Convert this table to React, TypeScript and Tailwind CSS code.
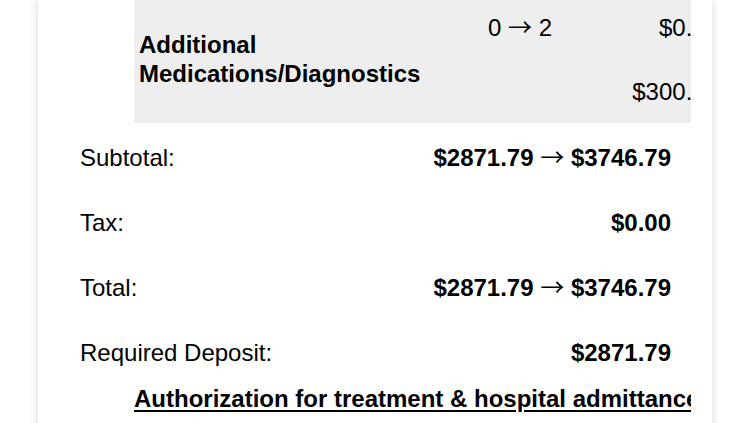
import React from 'react';

const Arrow = () => (
  <span className="inline-block w-[24px] text-center font-['Noto_Sans_CJK_JP'] font-normal leading-none">→</span>
);

const Change = ({ from, to }: { from: string; to: string }) => (
  <>
    {from} <Arrow /> {to}
  </>
);

const summary = [
  { label: 'Subtotal:', value: <Change from="$2871.79" to="$3746.79" /> },
  { label: 'Tax:', value: <>$0.00</> },
  { label: 'Total:', value: <Change from="$2871.79" to="$3746.79" /> },
];

export default function App() {
  return (
    <div
      className="min-h-screen bg-white text-black"
      style={{ fontFamily: '"Liberation Sans", Arial, Helvetica, sans-serif' }}
    >
      <div className="ml-[38px] w-[674px] bg-white pb-[60px] shadow-[0_0_9px_rgba(0,0,0,0.16)]">
        {/* estimate line item, cut off on the right */}
        <div className="ml-[96px] mr-[21px] overflow-hidden">
          <div className="flex h-[123px] w-max bg-[#eeeeee] text-[24px]">
            <div className="w-[330px] flex-none pl-[5px] pt-[30px] text-[24px] font-bold leading-[29px]">
              Additional
              <br />
              Medications/Diagnostics
            </div>
            <div className="h-[32px] w-[112px] flex-none mt-[12px] text-center leading-[32px]">
              <Change from="0" to="2" />
            </div>
            <div className="flex w-[143px] flex-none flex-col pt-[12px] text-right leading-[32px]">
              <span className="h-[32px]">$0.00</span>
              <span className="h-[32px]">
                <Arrow />
              </span>
              <span className="h-[32px]">$300.00</span>
            </div>
          </div>
        </div>

        {/* totals */}
        <div className="mt-[20px] flex flex-col gap-[36px] pl-[42px] pr-[41px] text-[24px] leading-[29px]">
          {summary.map((row) => (
            <div key={row.label} className="flex h-[29px] items-start justify-between">
              <span>{row.label}</span>
              <span className="font-bold">{row.value}</span>
            </div>
          ))}
          <div className="flex h-[29px] items-start justify-between">
            <span>Required Deposit:</span>
            <span className="font-bold">$2871.79</span>
          </div>
        </div>

        <div className="ml-[96px] mr-[21px] mt-[17px] overflow-hidden">
          <div className="w-max text-[24px] font-bold leading-[29px] underline decoration-2 underline-offset-[3px]">
            Authorization for treatment &amp; hospital admittance
          </div>
        </div>
      </div>
    </div>
  );
}
